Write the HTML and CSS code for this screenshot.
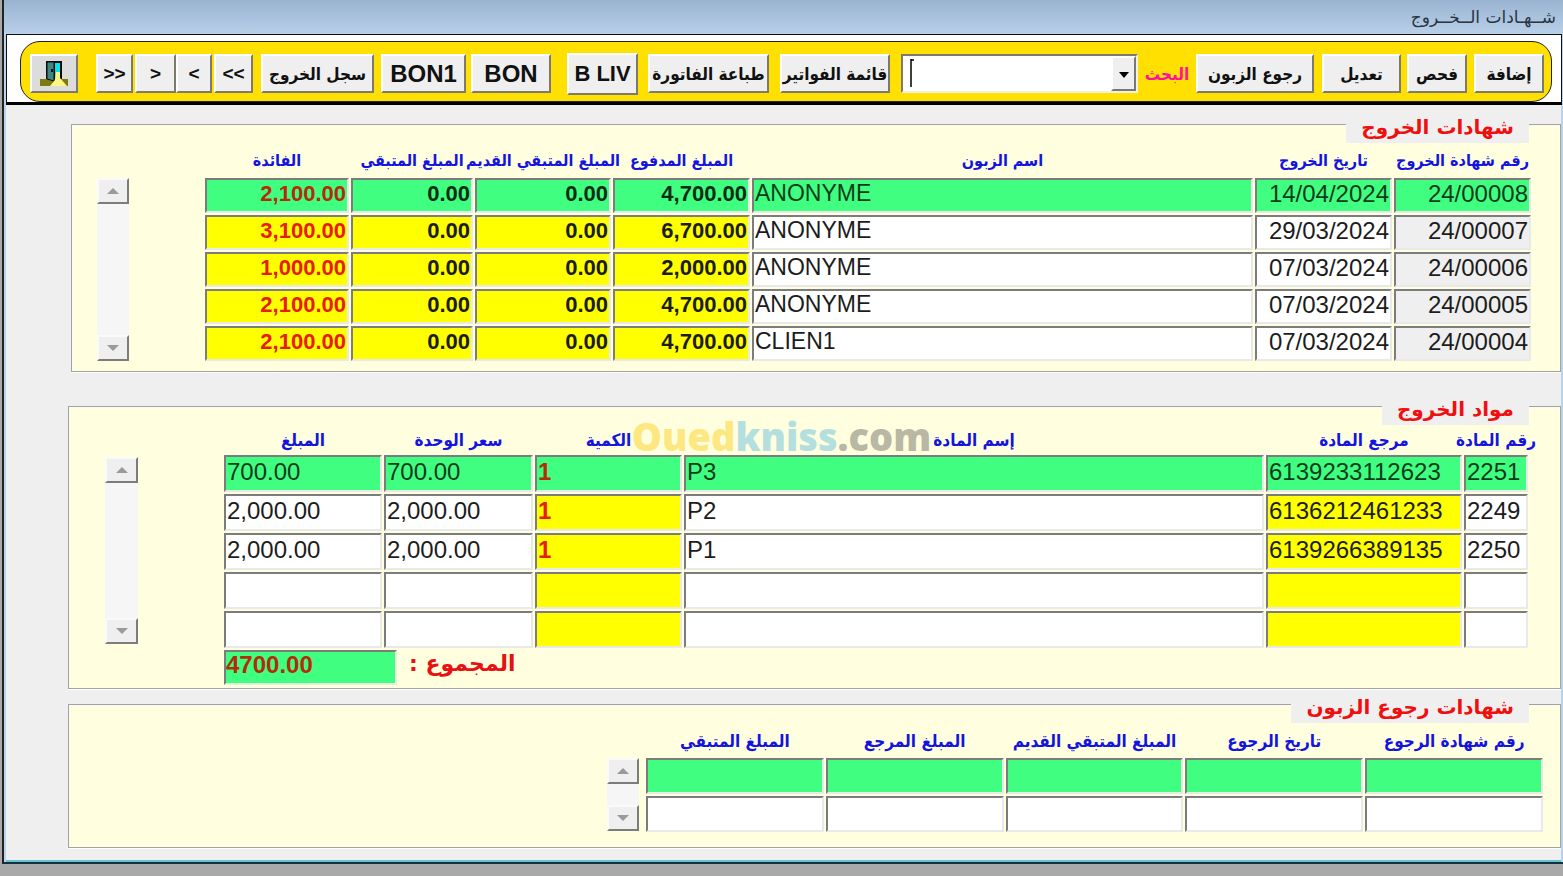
FILE: index.html
```html
<!DOCTYPE html>
<html lang="ar" dir="rtl">
<head>
<meta charset="utf-8">
<title>شهادات الخروج</title>
<link rel="stylesheet" href="styles.css">
</head>
<body>
<div class="window">
  <header class="titlebar">شــهـادات الــخــروج</header>

  <div class="toolbar-frame">
    <div class="toolbar">
      <button class="btn w-add" type="button">إضافة</button>
      <button class="btn w-check" type="button">فحص</button>
      <button class="btn w-edit" type="button">تعديل</button>
      <button class="btn w-return" type="button">رجوع الزبون</button>
      <label class="search-label" for="search">البحث</label>
      <div class="combo">
        <button class="combo-arrow" type="button" aria-label="فتح القائمة"><svg width="10" height="6" viewBox="0 0 10 6"><path d="M0 0h10L5 6z" fill="#000"/></svg></button>
        <input id="search" class="combo-input" type="text" dir="ltr">
        <svg class="caret" width="5" height="28" viewBox="0 0 5 28"><path d="M1 0v28M1 1h3" stroke="#000" stroke-width="1.5" fill="none"/></svg>
      </div>
      <button class="btn w-list" type="button">قائمة الفواتير</button>
      <button class="btn w-print" type="button">طباعة الفاتورة</button>
      <button class="btn latin small tall w-bliv" type="button" dir="ltr">B LIV</button>
      <button class="btn latin w-bon" type="button" dir="ltr">BON</button>
      <button class="btn latin w-bon1" type="button" dir="ltr">BON1</button>
      <button class="btn w-log" type="button">سجل الخروج</button>
      <button class="btn nav w-last" type="button" dir="ltr">&lt;&lt;</button>
      <div class="pair">
        <button class="btn nav w-next" type="button" dir="ltr">&lt;</button>
        <button class="btn nav w-prev" type="button" dir="ltr">&gt;</button>
      </div>
      <button class="btn nav w-first" type="button" dir="ltr">&gt;&gt;</button>
      <button class="btn exit w-exit" type="button" aria-label="خروج">
        <svg width="28" height="28" viewBox="0 0 28 28">
          <path d="M0 19h28v7H0z" fill="#7d7a10"/>
          <path d="M6 1h16v18H6z" fill="#0a0a0a"/>
          <path d="M15 3h5v16h-5z" fill="#00e5ee"/>
          <path d="M7 2h7v19l-7-2z" fill="#3f8584" stroke="#0a0a0a"/>
          <path d="M11 9h2v3h-2z" fill="#0a0a0a"/>
          <path d="M16 12h4v6l7 8H10l5-6z" fill="#fcf780"/>
        </svg>
      </button>
    </div>
  </div>

  <main class="content">
    <section class="panel panel-out">
      <h2 class="legend">شهادات الخروج</h2>
      <div class="grid-row">
        <table class="grid">
          <colgroup><col class="c-137"><col class="c-137"><col><col class="c-137"><col class="c-136"><col class="c-122"><col class="c-144"></colgroup>
          <thead><tr>
            <th><span>رقم شهادة الخروج</span></th><th><span>تاريخ الخروج</span></th><th><span>اسم الزبون</span></th><th><span>المبلغ المدفوع</span></th><th><span>المبلغ المتبقي القديم</span></th><th><span>المبلغ المتبقي</span></th><th><span>الفائدة</span></th>
          </tr></thead>
          <tbody>
            <tr class="selected"><td class="num grey">24/00008</td><td class="num">14/04/2024</td><td class="name">ANONYME</td><td class="sum">4,700.00</td><td class="sum">0.00</td><td class="sum">0.00</td><td class="sum red">2,100.00</td></tr>
            <tr><td class="num grey">24/00007</td><td class="num">29/03/2024</td><td class="name">ANONYME</td><td class="sum">6,700.00</td><td class="sum">0.00</td><td class="sum">0.00</td><td class="sum red">3,100.00</td></tr>
            <tr><td class="num grey">24/00006</td><td class="num">07/03/2024</td><td class="name">ANONYME</td><td class="sum">2,000.00</td><td class="sum">0.00</td><td class="sum">0.00</td><td class="sum red">1,000.00</td></tr>
            <tr><td class="num grey">24/00005</td><td class="num">07/03/2024</td><td class="name">ANONYME</td><td class="sum">4,700.00</td><td class="sum">0.00</td><td class="sum">0.00</td><td class="sum red">2,100.00</td></tr>
            <tr><td class="num grey">24/00004</td><td class="num">07/03/2024</td><td class="name">CLIEN1</td><td class="sum">4,700.00</td><td class="sum">0.00</td><td class="sum">0.00</td><td class="sum red">2,100.00</td></tr>
          </tbody>
        </table>
        <div class="scroll">
          <button class="scroll-btn" type="button" aria-label="أعلى"><svg width="12" height="6" viewBox="0 0 12 6"><path d="M0 6h12L6 0z" fill="#9a9a9a"/></svg></button>
          <button class="scroll-btn" type="button" aria-label="أسفل"><svg width="12" height="6" viewBox="0 0 12 6"><path d="M0 0h12L6 6z" fill="#9a9a9a"/></svg></button>
        </div>
      </div>
    </section>

    <section class="panel panel-items">
      <h2 class="legend">مواد الخروج</h2>
      <div class="grid-row">
        <table class="grid">
          <colgroup><col class="c-64"><col class="c-196"><col><col class="c-147"><col class="c-149"><col class="c-158"></colgroup>
          <thead><tr>
            <th><span>رقم المادة</span></th><th><span>مرجع المادة</span></th><th><span>إسم المادة</span></th><th><span>الكمية</span></th><th><span>سعر الوحدة</span></th><th><span>المبلغ</span></th>
          </tr></thead>
          <tbody>
            <tr class="selected"><td>2251</td><td class="yellow">6139233112623</td><td>P3</td><td class="yellow qty">1</td><td>700.00</td><td>700.00</td></tr>
            <tr><td>2249</td><td class="yellow">6136212461233</td><td>P2</td><td class="yellow qty">1</td><td>2,000.00</td><td>2,000.00</td></tr>
            <tr><td>2250</td><td class="yellow">6139266389135</td><td>P1</td><td class="yellow qty">1</td><td>2,000.00</td><td>2,000.00</td></tr>
            <tr><td></td><td class="yellow"></td><td></td><td class="yellow"></td><td></td><td></td></tr>
            <tr><td></td><td class="yellow"></td><td></td><td class="yellow"></td><td></td><td></td></tr>
          </tbody>
        </table>
        <div class="scroll">
          <button class="scroll-btn" type="button" aria-label="أعلى"><svg width="12" height="6" viewBox="0 0 12 6"><path d="M0 6h12L6 0z" fill="#9a9a9a"/></svg></button>
          <button class="scroll-btn" type="button" aria-label="أسفل"><svg width="12" height="6" viewBox="0 0 12 6"><path d="M0 0h12L6 6z" fill="#9a9a9a"/></svg></button>
        </div>
      </div>
      <div class="total">
        <label class="total-label" for="total">المجموع :</label>
        <input id="total" class="total-field" type="text" dir="ltr" value="4700.00" readonly>
      </div>
    </section>

    <section class="panel panel-returns">
      <h2 class="legend">شهادات رجوع الزبون</h2>
      <div class="grid-row">
        <table class="grid">
          <thead><tr>
            <th><span>رقم شهادة الرجوع</span></th><th><span>تاريخ الرجوع</span></th><th><span>المبلغ المتبقي القديم</span></th><th><span>المبلغ المرجع</span></th><th><span>المبلغ المتبقي</span></th>
          </tr></thead>
          <tbody>
            <tr class="selected"><td></td><td></td><td></td><td></td><td></td></tr>
            <tr><td></td><td></td><td></td><td></td><td></td></tr>
          </tbody>
        </table>
        <div class="scroll">
          <button class="scroll-btn" type="button" aria-label="أعلى"><svg width="12" height="6" viewBox="0 0 12 6"><path d="M0 6h12L6 0z" fill="#9a9a9a"/></svg></button>
          <button class="scroll-btn" type="button" aria-label="أسفل"><svg width="12" height="6" viewBox="0 0 12 6"><path d="M0 0h12L6 6z" fill="#9a9a9a"/></svg></button>
        </div>
      </div>
    </section>
  </main>
</div>
<div class="watermark" dir="ltr"><span class="wm-oued">Oued</span><span class="wm-kniss">kniss</span><span class="wm-com">.com</span></div>
</body>
</html>
```
FILE: styles.css
```css
* { box-sizing: border-box; }

body {
  margin: 0;
  min-width: 1400px;
  background: #a9a9a9;
  font-family: "Liberation Sans", "DejaVu Sans", sans-serif;
  color: #1c1c1c;
}

.window {
  margin-left: 2px;
  background: #efefef;
  border-left: 2px solid #222;
  border-bottom: 2px solid #10323c;
  box-shadow: inset 2px 0 #b9d4ea, inset -2px 0 #b9d4ea, inset 0 -2px #6cc0d6;
}

.titlebar {
  height: 34px;
  padding: 0 7px;
  background: linear-gradient(#9ab3d1, #b8d0e9);
  font-family: "DejaVu Sans", sans-serif;
  font-size: 17px;
  line-height: 34px;
  color: #2a3442;
}

.toolbar-frame {
  margin: 0 1px 0 2px;
  padding: 6px 9px 0 13px;
  background: #fff;
  border: 1px solid #111;
  border-bottom: 3px solid #000;
}

.toolbar {
  display: flex;
  align-items: center;
  height: 61px;
  padding: 4px 7px 0 9px;
  background: #ffe000;
  border: 1px solid #222;
  border-radius: 20px;
}

.btn {
  flex: none;
  height: 39px;
  padding: 0;
  background: #efefef;
  border: 2px solid;
  border-color: #fff #7d7a6c #7d7a6c #fff;
  font-family: "DejaVu Sans Condensed", "DejaVu Sans", sans-serif;
  font-size: 17px;
  font-weight: 700;
  line-height: 24px;
  white-space: nowrap;
  color: #111;
}

.btn.latin { font-family: "Liberation Sans", sans-serif; font-size: 24px; }
.btn.small { font-size: 22px; }
.btn.tall { height: 42px; }
.btn.nav { font-family: "Liberation Sans", sans-serif; font-size: 19px; }
.btn.exit { background: #dcdcdc; }
.exit svg { display: block; margin: 0 auto; }

.w-add { width: 70px; }
.w-check { width: 60px; margin-right: 7px; }
.w-edit { width: 79px; margin-right: 6px; }
.w-return { width: 118px; margin-right: 8px; }
.w-list { width: 110px; margin-right: 11px; }
.w-print { width: 121px; margin-right: 11px; }
.w-bliv { width: 71px; margin-right: 10px; }
.w-bon { width: 80px; margin-right: 16px; }
.w-bon1 { width: 85px; margin-right: 5px; }
.w-log { width: 113px; margin-right: 7px; }
.w-last { width: 39px; margin-right: 8px; }
.pair { display: flex; margin-right: 2px; }
.w-next { width: 36px; }
.w-prev { width: 41px; }
.w-first { width: 37px; margin-right: 2px; }
.w-exit { width: 48px; margin-right: 18px; }

.search-label {
  flex: none;
  width: 58px;
  text-align: center;
  font-family: "DejaVu Sans Condensed", "DejaVu Sans", sans-serif;
  font-size: 17px;
  font-weight: 700;
  white-space: nowrap;
  color: #ff10a0;
}

.combo {
  position: relative;
  display: flex;
  flex: 1;
  min-width: 120px;
  height: 39px;
  background: #fff;
  border: 2px solid;
  border-color: #7d7a6c #f2f2e0 #f2f2e0 #7d7a6c;
}
.combo-arrow {
  flex: none;
  width: 25px;
  padding: 0;
  background: #efefef;
  border: 2px solid;
  border-color: #fff #777 #777 #fff;
}
.combo-input {
  flex: 1;
  min-width: 0;
  padding: 0 9px;
  border: 0;
  background: transparent;
  font-family: "Liberation Sans", sans-serif;
  font-size: 22px;
}
.caret { position: absolute; left: 7px; top: 3px; }

.content { padding: 19px 0 14px 64px; }

.panel {
  display: flex;
  flex-direction: column;
  align-items: stretch;
  margin-right: 2px;
  margin-left: 3px;
  background: #ffffdf;
  border: 1px solid #a3a3a3;
  box-shadow: inset 1px 1px #fbfbf4, 0 1px #fff;
}
.panel-items { margin: 34px 2px 0 0; }
.panel-returns { margin: 15px 2px 0 0; }

.legend {
  align-self: flex-start;
  margin: -13px 31px 0 0;
  padding: 0 15px;
  background: #efefef;
  font-family: "DejaVu Sans", sans-serif;
  font-size: 20px;
  font-weight: 700;
  line-height: 31px;
  white-space: nowrap;
  color: #f00f0f;
}

.grid-row { display: flex; }
.panel-out .grid-row { padding: 0 27px 8px 25px; }
.panel-items .grid-row { padding: 0 30px 0 36px; }
.panel-returns .grid-row { padding: 0 15px 13px 0; }

.grid {
  flex: 1;
  width: 100%;
  table-layout: fixed;
  border-collapse: separate;
  border-spacing: 2px;
}
.panel-returns .grid { flex: 0 1 901px; }

.grid th {
  height: 31px;
  padding: 0;
  font-family: "DejaVu Sans Condensed", "DejaVu Sans", sans-serif;
  font-size: 17px;
  font-weight: 700;
  line-height: 24px;
  color: #1414e0;
}
.panel-out .grid th { font-size: 16px; }
.panel-items .grid th { height: 26px; }
.grid th span { display: flex; justify-content: center; white-space: nowrap; }

.grid td {
  height: 35px;
  padding: 0 1px;
  overflow: hidden;
  background: #fff;
  border: 2px solid;
  border-color: #7c7c7c #e9e9e9 #e9e9e9 #7c7c7c;
  direction: ltr;
  text-align: left;
  vertical-align: top;
  font-size: 24px;
  line-height: 27px;
  white-space: nowrap;
}
.panel-items .grid td { height: 37px; line-height: 29px; }
.panel-returns .grid td { height: 36px; }

.grid td.num { text-align: right; }
.grid td.name { font-size: 23px; }
.grid td.grey { background: #efefef; }
.grid td.yellow { background: #ff0; }
.grid td.qty { font-weight: 700; color: #e81c00; }
.grid td.sum { background: #ff0; text-align: right; font-size: 22px; font-weight: 700; }
.grid td.red { color: #e81c00; }
.grid .selected td { background: #40ff80; color: #0c3c1c; }
.grid .selected td.sum { color: #082c14; }
.grid .selected td.red, .grid .selected td.qty { color: #b42c08; }

.c-64 { width: 64px; }
.c-122 { width: 122px; }
.c-136 { width: 136px; }
.c-137 { width: 137px; }
.c-144 { width: 144px; }
.c-147 { width: 147px; }
.c-149 { width: 149px; }
.c-158 { width: 158px; }
.c-196 { width: 196px; }

.scroll {
  display: flex;
  flex: none;
  flex-direction: column;
  justify-content: space-between;
  width: 32px;
  margin: 35px 74px 2px 0;
  background: #f6f6f6;
}
.panel-items .scroll { width: 33px; margin: 32px 84px 6px 0; }
.panel-returns .scroll { margin: 35px 5px 3px 0; }

.scroll-btn {
  height: 26px;
  padding: 0;
  background: #efefef;
  border: 2px solid;
  border-color: #fafafa #7c7c7c #7c7c7c #fafafa;
  line-height: 0;
}

.total {
  display: flex;
  justify-content: flex-end;
  align-items: flex-start;
  gap: 12px;
  padding: 0 0 3px 155px;
}
.total-label {
  font-family: "DejaVu Sans", sans-serif;
  font-size: 22px;
  font-weight: 700;
  line-height: 27px;
  color: #e81010;
}
.total-field {
  width: 173px;
  height: 35px;
  padding: 0 0 5px;
  background: #40ff80;
  border: 2px solid;
  border-color: #7c7c7c #e0f4e0 #e0f4e0 #7c7c7c;
  font-family: "Liberation Sans", sans-serif;
  font-size: 24px;
  font-weight: 700;
  color: #b42c08;
}

.watermark {
  position: absolute;
  top: 436px;
  left: 50%;
  transform: translate(-50%, -50%);
  font-family: "Open Sans", sans-serif;
  font-size: 38px;
  font-weight: 800;
  line-height: 38px;
  white-space: nowrap;
  opacity: 0.5;
  pointer-events: none;
}
.wm-oued { color: #fbd024; }
.wm-kniss { color: #6cc0e0; }
.wm-com { color: #75736a; }
```
